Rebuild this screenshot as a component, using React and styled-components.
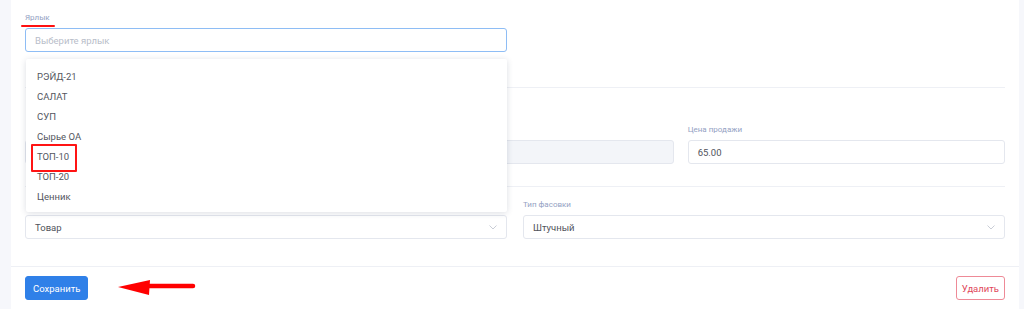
import React, { useState } from 'react';
import styled, { createGlobalStyle } from 'styled-components';

const GlobalStyle = createGlobalStyle`
  html, body {
    margin: 0;
    padding: 0;
    background: #f6f7fb;
    font-family: Roboto, Inter, "Noto Sans", sans-serif;
    overflow: hidden;
  }
`;

const Page = styled.div`
  width: 1024px;
  height: 309px;
  display: flex;
  padding-left: 11px;
  box-sizing: border-box;
`;

const Card = styled.div`
  position: relative;
  width: 1008px;
  background: #fff;
  display: flex;
  flex-direction: column;
`;

const Section = styled.div`
  margin: 0 14px;
  padding: ${p => p.pad};
  border-bottom: ${p => (p.last ? 'none' : '1px solid #eef0f5')};
  display: grid;
  grid-template-columns: ${p => p.cols};
  column-gap: ${p => p.gap || '14px'};
`;

const Field = styled.div`
  position: relative;
  display: flex;
  flex-direction: column;
`;

const Label = styled.label`
  position: relative;
  font-size: 8px;
  line-height: 12px;
  height: 12px;
  color: #94a1c3;
  margin-bottom: 4px;
  align-self: flex-start;
`;

const Input = styled.div`
  height: 24px;
  box-sizing: border-box;
  border: 1px solid ${p => (p.focus ? '#8ebdf5' : '#e4e7ee')};
  border-radius: 3px;
  background: ${p => (p.disabled ? '#f3f5f9' : '#fff')};
  display: flex;
  align-items: center;
  justify-content: space-between;
  padding: 0 9px;
  font-size: 9.5px;
  color: ${p => (p.placeholder ? '#b8bdc9' : '#50535b')};
`;

const Chevron = () => (
  <svg width="8" height="5" viewBox="0 0 8 5" fill="none">
    <path d="M0.5 0.5 L4 4 L7.5 0.5" stroke="#c3c7d1" strokeWidth="0.9" />
  </svg>
);

const Dropdown = styled.ul`
  position: absolute;
  top: 47px;
  left: 1px;
  right: 0;
  margin: 0;
  padding: 8px 0 5px;
  list-style: none;
  background: #fff;
  border-radius: 2px;
  box-shadow: 0 1px 6px rgba(40, 50, 80, 0.16);
  z-index: 5;
`;

const Option = styled.li`
  position: relative;
  height: 20px;
  line-height: 20px;
  padding: 0 11px;
  font-size: 9.5px;
  color: #53565e;
`;

const Mark = styled.span`
  position: absolute;
  left: 5px;
  top: -3px;
  width: 46px;
  height: 28px;
  box-sizing: border-box;
  border: 2px solid #ff1414;
  border-radius: 1px;
`;

const Underline = styled.span`
  position: absolute;
  left: -4px;
  bottom: -3px;
  width: 34px;
  height: 2px;
  border-radius: 1px;
  background: #ff1010;
`;

const Footer = styled.div`
  margin-top: auto;
  border-top: 1px solid #eef0f5;
  padding: 9px 14px 9px;
  display: flex;
  align-items: center;
  justify-content: space-between;
`;

const Left = styled.div`
  display: flex;
  align-items: center;
  gap: 30px;
`;

const Button = styled.button`
  height: 24px;
  box-sizing: border-box;
  border-radius: 3px;
  font-family: inherit;
  font-size: 9.5px;
  padding: 0 ${p => (p.danger ? '5px' : '7px')};
  background: ${p => (p.danger ? '#fff' : '#2f80e8')};
  color: ${p => (p.danger ? '#e0475a' : '#fff')};
  border: 1px solid ${p => (p.danger ? '#ee8a97' : '#2f80e8')};
`;

const Arrow = () => (
  <svg width="78" height="18" viewBox="0 0 78 18">
    <path d="M30 7 L75 7" stroke="#ff0000" strokeWidth="4.5" strokeLinecap="round" />
    <path d="M0 8 L32 1 L31 16 Z" fill="#ff0000" />
  </svg>
);

const labels = ['РЭЙД-21', 'САЛАТ', 'СУП', 'Сырье ОА', 'ТОП-10', 'ТОП-20', 'Ценник'];

export default function App() {
  const [open] = useState(true);

  return (
    <Page>
      <GlobalStyle />
      <Card>
        <Section pad="12px 0 35px" cols="1fr 1fr" gap="16px">
          <Field>
            <Label>
              Ярлык
              <Underline />
            </Label>
            <Input focus placeholder="true">Выберите ярлык</Input>
            {open ? (
              <Dropdown>
                {labels.map(l => (
                  <Option key={l}>
                    {l}
                    {l === 'ТОП-10' ? <Mark /> : null}
                  </Option>
                ))}
              </Dropdown>
            ) : null}
          </Field>
          <div />
        </Section>
        <Section pad="36px 0 22px" cols="1fr 1fr 1fr">
          <Field>
            <Label />
            <Input />
          </Field>
          <Field>
            <Label />
            <Input disabled />
          </Field>
          <Field>
            <Label>Цена продажи</Label>
            <Input>65.00</Input>
          </Field>
        </Section>
        <Section pad="12px 0 26px" cols="1fr 1fr" gap="16px" last>
          <Field>
            <Label />
            <Input>
              Товар
              <Chevron />
            </Input>
          </Field>
          <Field>
            <Label>Тип фасовки</Label>
            <Input>
              Штучный
              <Chevron />
            </Input>
          </Field>
        </Section>
        <Footer>
          <Left>
            <Button>Сохранить</Button>
            <Arrow />
          </Left>
          <Button danger>Удалить</Button>
        </Footer>
      </Card>
    </Page>
  );
}
